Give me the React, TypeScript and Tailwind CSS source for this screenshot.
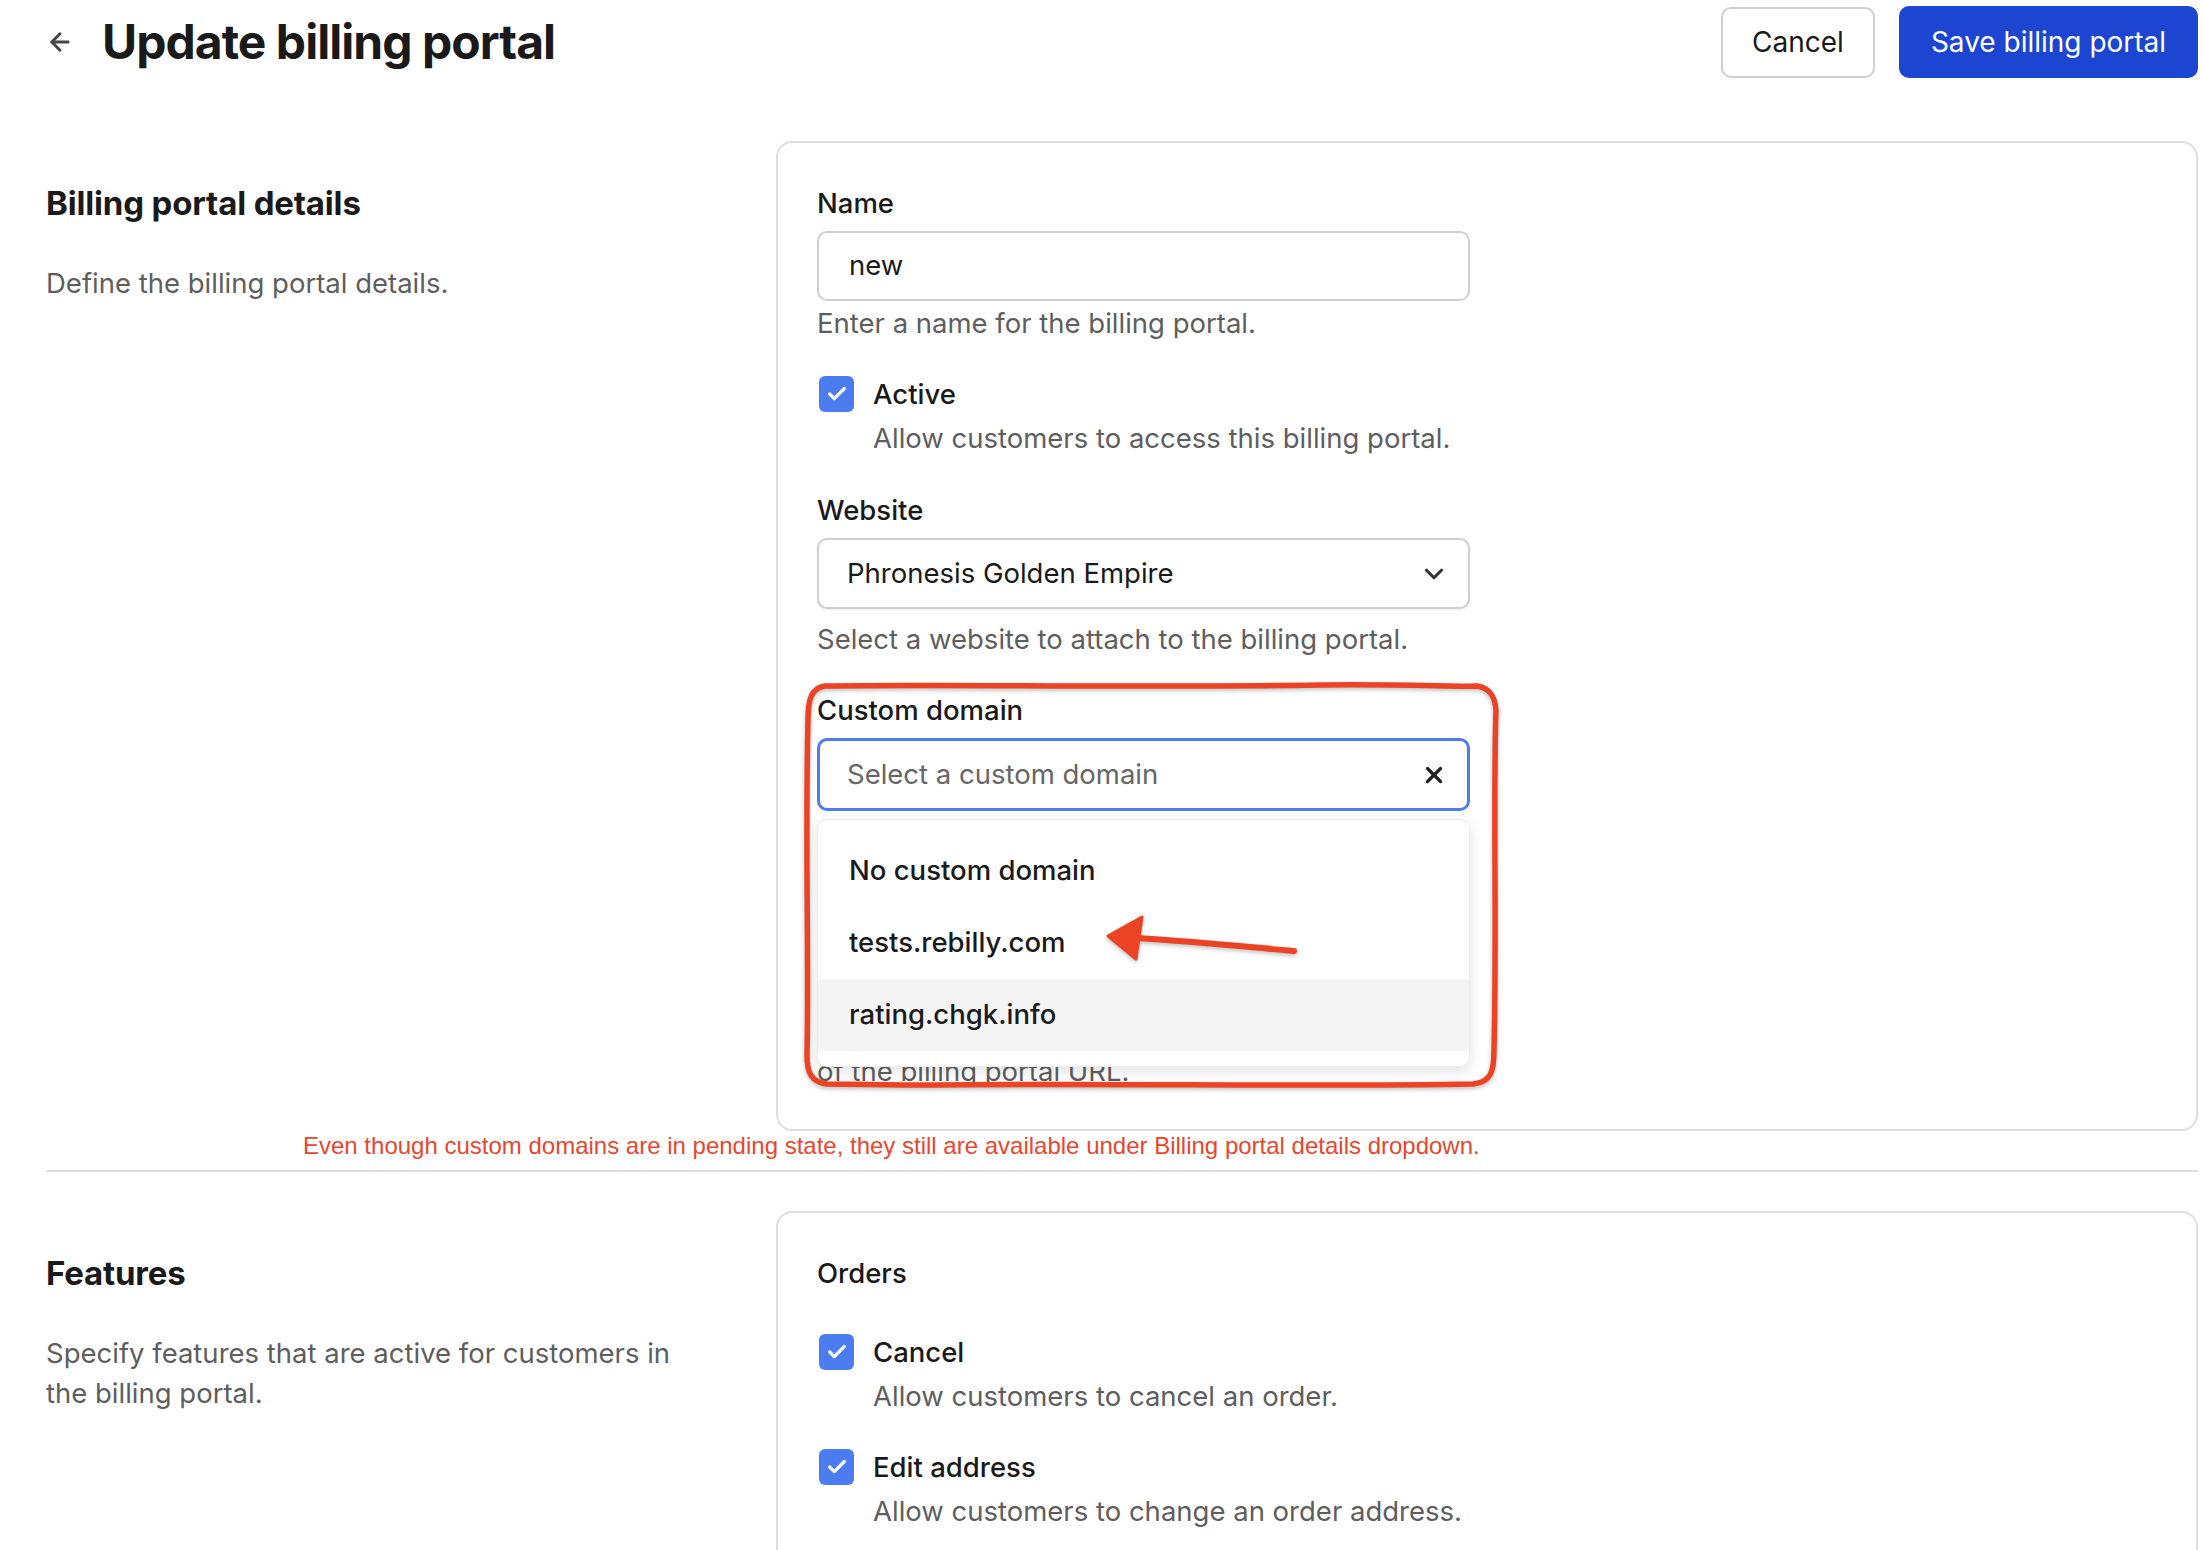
import { Check, X, ChevronDown, ArrowLeft } from 'lucide-react';

const font = { fontFamily: 'Inter, "Noto Sans", sans-serif' };

function Checkbox() {
  return (
    <span className="flex h-[36px] w-[35px] shrink-0 items-center justify-center rounded-[6px] bg-[#4b7cf0]">
      <Check className="h-[22px] w-[22px] text-white" strokeWidth={3.5} />
    </span>
  );
}

function CheckRow({ label, desc, className = '' }: { label: string; desc: string; className?: string }) {
  return (
    <div className={className}>
      <div className="flex h-[40px] items-center">
        <span className="ml-[2px]"><Checkbox /></span>
        <span className="ml-[19px] text-[27.5px] leading-[40px] font-medium text-[#1a1a1a]">{label}</span>
      </div>
      <p className="mt-[4px] pl-[56px] text-[27.5px] leading-[40px] text-[#5e5e5e]">{desc}</p>
    </div>
  );
}

function Annotation() {
  // hand drawn red box round the custom domain field
  return (
    <svg
      className="pointer-events-none absolute left-[-16px] top-[-10px] z-20 drop-shadow-[0_2px_2px_rgba(0,0,0,0.25)]"
      width="700"
      height="414"
      viewBox="0 0 700 414"
    >
      <path
        d="M24 6 C150 4 330 8 520 5 C600 4 660 7 676 6 C690 8 694 18 695 30 C692 120 696 250 693 370 C693 392 690 402 672 404 C520 407 300 403 120 405 C70 405 40 404 26 404 C10 402 6 392 6 376 C8 280 4 160 7 40 C7 20 10 8 24 6 Z"
        fill="none"
        stroke="#ec4325"
        strokeWidth="5.5"
        strokeLinejoin="round"
      />
    </svg>
  );
}

function RedArrow() {
  return (
    <svg
      className="pointer-events-none absolute left-[280px] top-0 z-20 drop-shadow-[0_2px_2px_rgba(0,0,0,0.25)]"
      width="210"
      height="72"
      viewBox="0 0 210 72"
    >
      <path d="M40 31 C90 34 150 40 196 44" fill="none" stroke="#ec4325" strokeWidth="6" strokeLinecap="round" />
      <path d="M10 29 L44 10 L38 52 Z" fill="#ec4325" stroke="#ec4325" strokeWidth="3" strokeLinejoin="round" />
    </svg>
  );
}

export default function App() {
  const options = ['No custom domain', 'tests.rebilly.com', 'rating.chgk.info'];

  return (
    <div style={font} className="min-h-screen bg-white pl-[46px] pr-[6px] pt-[6px] text-[#1a1a1a]">
      <header className="flex h-[72px] items-center justify-between">
        <div className="flex items-center">
          <ArrowLeft className="h-[28px] w-[28px] text-[#444]" strokeWidth={2.5} />
          <h1 className="ml-[28px] text-[48px] font-bold tracking-[-0.02em]">Update billing portal</h1>
        </div>
        <div className="flex items-center gap-[24px]">
          <button className="h-[71px] w-[154px] rounded-[10px] border-2 border-[#cfcfcf] bg-white text-[28px]">Cancel</button>
          <button className="h-[72px] w-[299px] rounded-[10px] bg-[#1c45d1] text-[28px] text-white">Save billing portal</button>
        </div>
      </header>

      <section className="mt-[63px] flex">
        <div className="w-[730px] shrink-0 pt-[42px]">
          <h2 className="text-[33px] leading-[40px] font-bold tracking-[-0.005em]">Billing portal details</h2>
          <p className="mt-[40px] text-[27.5px] leading-[40px] text-[#5e5e5e]">Define the billing portal details.</p>
        </div>

        <div className="flex-1 rounded-[16px] border-2 border-[#dedede] pl-[39px] pt-[40px] pb-[38px]">
          <div className="w-[653px]">
            <label className="block text-[27.5px] leading-[40px] font-medium">Name</label>
            <div className="mt-[8px] flex h-[70px] items-center rounded-[10px] border-2 border-[#cfcfcf] px-[30px] text-[27.5px]">new</div>
            <p className="mt-[2px] text-[27.5px] leading-[40px] text-[#5e5e5e]">Enter a name for the billing portal.</p>

            <CheckRow className="mt-[31px]" label="Active" desc="Allow customers to access this billing portal." />

            <label className="mt-[32px] block text-[27.5px] leading-[40px] font-medium">Website</label>
            <div className="mt-[8px] flex h-[71px] items-center justify-between rounded-[10px] border-2 border-[#cfcfcf] pl-[28px] pr-[19px] text-[27.5px] shadow-[0_1px_2px_rgba(0,0,0,0.08)]">
              <span>Phronesis Golden Empire</span>
              <ChevronDown className="h-[30px] w-[30px] text-[#333]" strokeWidth={2.5} />
            </div>
            <p className="mt-[10px] text-[27.5px] leading-[40px] text-[#5e5e5e]">Select a website to attach to the billing portal.</p>

            <div className="relative mt-[31px]">
              <Annotation />
              <label className="block text-[27.5px] leading-[40px] font-medium">Custom domain</label>
              <div className="relative mt-[8px]">
                <div className="flex h-[73px] items-center justify-between rounded-[10px] border-[3px] border-[#4b7cf0] pl-[27px] pr-[20px] text-[27.5px] text-[#666]">
                  <span>Select a custom domain</span>
                  <X className="h-[26px] w-[26px] text-[#222]" strokeWidth={3} />
                </div>
                <div className="absolute left-0 right-0 top-[81px] z-10 rounded-[10px] border border-[#ececec] bg-white py-[15px] shadow-[0_4px_14px_rgba(0,0,0,0.12)]">
                  {options.map((o, i) => (
                    <div
                      key={o}
                      className={`relative flex h-[72px] items-center px-[31px] text-[27.5px] font-medium ${i === 2 ? 'bg-[#f4f4f4]' : ''}`}
                    >
                      {o}
                      {i === 1 && <RedArrow />}
                    </div>
                  ))}
                </div>
              </div>
              {/* help text sits under the open menu */}
              <p className="mt-[200px] text-[27.5px] leading-[40px] text-[#5e5e5e]">
                Select a custom domain to use as the domain
                <br />
                of the billing portal URL.
              </p>
            </div>
          </div>
        </div>
      </section>

      <p className="ml-[257px] mt-[2px] text-[24px] leading-[25px] text-[#e9462e]" style={{ fontFamily: '"Liberation Sans", Arial, sans-serif' }}>
        Even though custom domains are in pending state, they still are available under Billing portal details dropdown.
      </p>
      <div className="mt-[12px] h-[2px] bg-[#dedede]" />

      <section className="mt-[39px] flex">
        <div className="w-[730px] shrink-0 pt-[42px]">
          <h2 className="text-[33px] leading-[40px] font-bold tracking-[-0.005em]">Features</h2>
          <p className="mt-[40px] max-w-[660px] text-[27.5px] leading-[40px] text-[#5e5e5e]">
            Specify features that are active for customers in the billing portal.
          </p>
        </div>

        <div className="flex-1 rounded-[16px] border-2 border-[#dedede] pl-[39px] pt-[40px] pb-[40px]">
          <h3 className="text-[27.5px] leading-[40px] font-medium">Orders</h3>
          <CheckRow className="mt-[39px]" label="Cancel" desc="Allow customers to cancel an order." />
          <CheckRow className="mt-[31px]" label="Edit address" desc="Allow customers to change an order address." />
          <CheckRow className="mt-[31px]" label="Change plan" desc="Allow customers to change the plan of an order." />
        </div>
      </section>
    </div>
  );
}
